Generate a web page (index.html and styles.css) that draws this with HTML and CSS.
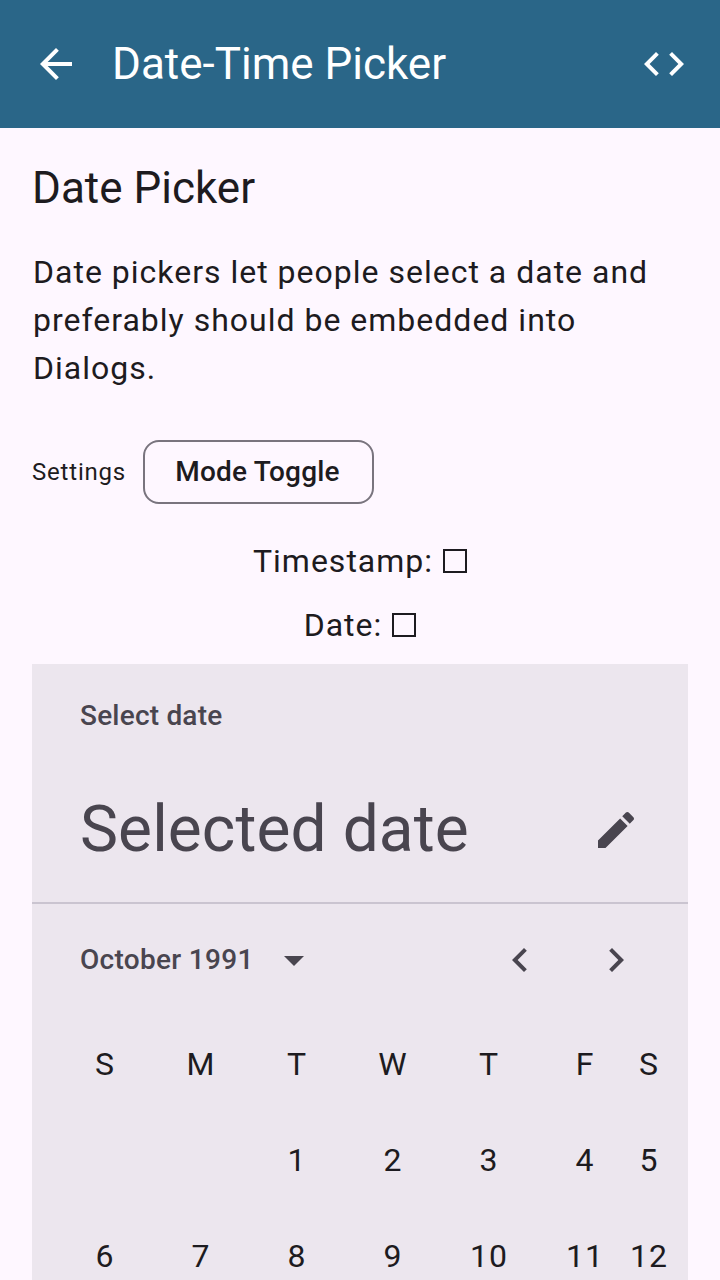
FILE: index.html
```html
<!DOCTYPE html>
<html lang="en">
<head>
<meta charset="utf-8">
<title>Date-Time Picker</title>
<link rel="stylesheet" href="styles.css">
</head>
<body>
<header class="app-bar">
  <svg class="icon" viewBox="0 0 24 24"><path d="M20 11H7.83l5.59-5.59L12 4l-8 8 8 8 1.41-1.41L7.83 13H20v-2z"/></svg>
  <h1 class="app-title">Date-Time Picker</h1>
  <svg class="icon" viewBox="0 0 24 24"><path d="M9.4 16.6 4.8 12l4.6-4.6L8 6l-6 6 6 6 1.400-1.400zm5.200 0 4.600-4.600-4.600-4.600L16 6l6 6-6 6-1.400-1.400z"/></svg>
</header>
<main class="content">
  <h2 class="heading">Date Picker</h2>
  <p class="description">Date pickers let people select a date and preferably should be embedded into Dialogs.</p>
  <div class="settings"><span class="settings-label">Settings</span><button class="toggle">Mode Toggle</button></div>
  <div class="value">Timestamp: <span class="empty-box"></span></div>
  <div class="value">Date: <span class="empty-box"></span></div>
  <section class="picker">
    <div class="picker-title">Select date</div>
    <div class="headline"><span class="headline-text">Selected date</span>
      <svg class="icon" viewBox="0 0 24 24"><path d="M3 17.250V21h3.750L17.810 9.940l-3.750-3.750L3 17.250zM20.710 7.040c.390-.390.390-1.020 0-1.410l-2.340-2.340c-.390-.390-1.020-.390-1.410 0l-1.830 1.830 3.750 3.750 1.830-1.830z"/></svg>
    </div>
    <div class="month-bar">
      <span class="month">October 1991</span>
      <svg class="icon caret" viewBox="0 0 24 24"><path d="M7 10l5 5 5-5z"/></svg>
      <svg class="icon previous" viewBox="0 0 24 24"><path d="M15.410 7.410 14 6l-6 6 6 6 1.410-1.410L10.830 12z"/></svg>
      <svg class="icon next" viewBox="0 0 24 24"><path d="M10 6 8.590 7.410 13.170 12l-4.580 4.590L10 18l6-6z"/></svg>
    </div>
    <div class="calendar">
      <span>S</span><span>M</span><span>T</span><span>W</span><span>T</span><span>F</span><span>S</span>
      <span></span><span></span><span>1</span><span>2</span><span>3</span><span>4</span><span>5</span>
      <span>6</span><span>7</span><span>8</span><span>9</span><span>10</span><span>11</span><span>12</span>
    </div>
  </section>
</main>
</body>
</html>
```
FILE: styles.css
```css
* { box-sizing: border-box; }
body { margin: 0; height: 1280px; overflow: hidden; background: #fef7ff; color: #1d1b20; font-family: Roboto, sans-serif; }
.icon { width: 48px; height: 48px; fill: currentColor; flex: none; }
.app-bar { height: 128px; padding: 0 32px; display: flex; align-items: center; background: #2a6688; color: #fff; }
.app-title { flex: 1; margin: 0 0 0 32px; font-size: 44px; font-weight: 400; line-height: 56px; }
.content { padding: 32px 32px 0; }
.heading { margin: 0; font-size: 44px; font-weight: 400; line-height: 56px; }
.description { margin: 32px 0 48px; padding-left: 1px; font-size: 32px; line-height: 48px; letter-spacing: 1px; }
.settings { display: flex; align-items: center; height: 64px; margin-bottom: 25px; }
.settings-label { width: 111px; font-size: 24px; letter-spacing: 0.8px; }
.toggle { width: 231px; height: 64px; padding: 0 2px 2px 0; border: 2px solid #79747e; border-radius: 16px; background: transparent; color: inherit; font: 500 28px Roboto, sans-serif; letter-spacing: 0.2px; }
.value { display: flex; justify-content: center; align-items: center; gap: 10px; height: 64px; font-size: 32px; letter-spacing: 1px; }
.empty-box { width: 24px; height: 24px; margin-bottom: 1px; border: 2px solid currentColor; }
.picker { height: 616px; margin-top: 7px; overflow: hidden; background: #ece6ee; color: #49454f; }
.picker-title { padding: 32px 48px 0; font-size: 28px; font-weight: 500; line-height: 40px; letter-spacing: 0.2px; }
.headline { height: 168px; padding: 22px 48px 0; border-bottom: 2px solid #cac4d0; display: flex; align-items: center; justify-content: space-between; font-size: 64px; letter-spacing: 0.1px; }
.headline-text { padding-bottom: 2px; }
.month-bar { height: 112px; padding: 0 48px; display: flex; align-items: center; }
.month { width: 190px; padding-bottom: 2px; font-size: 28px; font-weight: 500; letter-spacing: 0.3px; }
.previous { margin-left: 178px; }
.next { margin-left: 48px; }
.calendar { display: grid; grid-template-columns: repeat(6, 96px) 32px; grid-auto-rows: 96px; padding-left: 25px; color: #1d1b20; font-size: 32px; letter-spacing: 1px; }
.calendar span { display: flex; align-items: center; justify-content: center; }
```
